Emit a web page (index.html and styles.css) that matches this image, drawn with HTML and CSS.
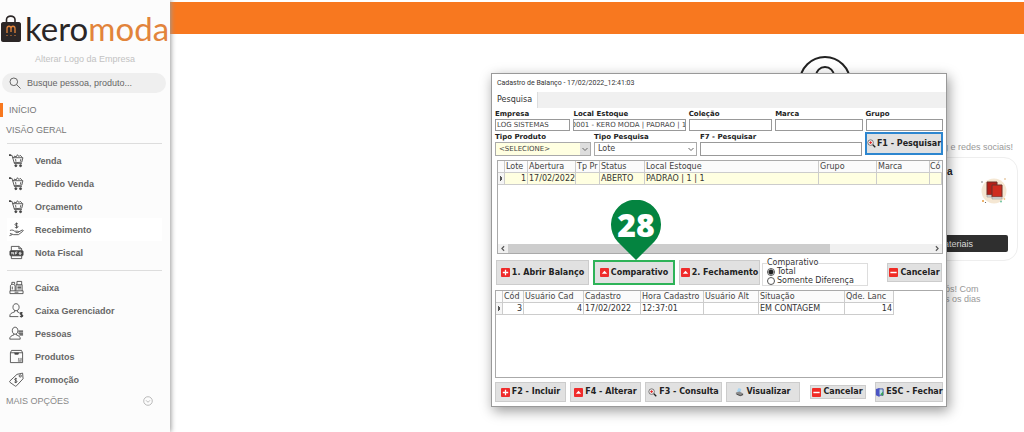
FILE: index.html
```html
<!DOCTYPE html>
<html lang="pt-BR">
<head>
<meta charset="utf-8">
<meta name="viewport" content="width=device-width, initial-scale=1">
<title>Kero Moda - Cadastro de Balanço</title>
<link rel="stylesheet" href="styles.css">
</head>
<body>
<svg class="defs" aria-hidden="true">
  <symbol id="cart" viewBox="0 0 16 16"><path d="M0 2.5h3.2l2.6 8.8h8M3.8 5h11l-1.2 4.8-8.2.6M5 4.8l1-1.6 1.6 1L9 1.8l1.6 2 1.4-1.4 2 2.2M7 6.5l.4 2.8M12.6 6.5l-.4 2.5"/><circle cx="7.3" cy="13.5" r="1.1" class="solid"/><circle cx="12.3" cy="13.5" r="1.1" class="solid"/><path d="M0 2.2h2" class="bold"/></symbol>
  <symbol id="hand" viewBox="0 0 16 16"><path d="M9.6 2.2C8.600 1.200 6.400 1.400 6.400 2.800S9.600 3.600 9.600 5 7.200 6.500 6.200 5.500M8 .6v6.200M1 9c3-1 4 0 5 .8h3.500c1 0 1 1.500 0 1.500H7M10 10.800l4-2.200c1.500-.3 1.500.8.500 1.500L10 13.500H5L1 12.200M.5 14.500l3-1"/></symbol>
  <symbol id="nfe" viewBox="0 0 16 16"><path d="M2.500 6V1.500h8L13.500 4v2M2.500 11.500v3h11v-3M10.500 1.500V4h3"/><rect x="1" y="6" width="14" height="5.500" rx="1" class="solid"/><path d="M3 10V7.500l2 2.500V7.500M7 10V7.500h2M7 8.800h1.500M11 9.200h2c0-2-2.200-2-2.200-.2 0 1.500 1.600 1.300 2 .8" stroke="#fff" stroke-width=".8"/></symbol>
  <symbol id="register" viewBox="0 0 16 16"><path d="M1 14.500v-3h14v3zM1.500 11.500V6.500C1.500 4 6 4 6.500 6.500v5M3 4.800V2.500h3v2.300M7.500 11V5h6.500v6.500M8.500 5V1.500h5V5"/><path d="M9 6.500h4M9 8h4M9 9.500h4M3.500 7v3M6 13h4"/></symbol>
  <symbol id="user-money" viewBox="0 0 16 16"><path d="M4.200 4.500c0-5 6.600-5 6.600 0S4.200 9.500 4.200 4.500M6 8v1.500C3 10.500.8 11 .8 14.500H10M9 8v1.500l2 .8"/><path d="M14.500 10.800c-1-1-2.800-.5-2.600.6.100 1.200 2.800.8 2.800 2.200 0 1.300-2 1.500-3 .5M13.200 9.500v6" stroke-width="1.200"/></symbol>
  <symbol id="user-list" viewBox="0 0 16 16"><path d="M3.500 5c0-5 6-5 6 0s-6 5-6 0M5.200 8.500v1C2.500 10.500.8 11 .8 14H12c0-3-1.500-3.500-4.200-4.500v-1"/><path d="M10 5.500H15M10 7.500H15M11 9.500H15" stroke-width="1.300"/></symbol>
  <symbol id="box" viewBox="0 0 16 16"><path d="M1.500 4v10.500h13V4zM1.500 4l1.200-2.500h10.600L14.500 4M6 4l.5 1h3.500V4M9.500 12.800h4M10.500 12V9.500M12.800 12V9.500"/><path d="M6 5h4" class="bold"/></symbol>
  <symbol id="tag" viewBox="0 0 16 16"><path d="m1 9.500 7.500-7L14.500 1.200l.5 6-7 7.500c-.6.600-1.200.600-1.800 0L1 11c-.5-.5-.5-1 0-1.500zM8.500 7.500c-1-1-2.600-.6-2.400.6.200 1.300 2.600.8 2.400 2.200-.2 1.200-2 1.300-2.800.3M7.200 6.200v5.600"/><circle cx="12" cy="4.200" r="1.200"/></symbol>
  <symbol id="add" viewBox="0 0 10 10"><rect width="10" height="10" rx="1" fill="#ef2b2b"/><path d="M5 2v6M2 5h6" stroke="#fff" stroke-width="1.400"/></symbol>
  <symbol id="up" viewBox="0 0 10 10"><rect width="10" height="10" rx="1" fill="#ef2b2b"/><path d="m5 3 3 3.500H2z" fill="#fff"/></symbol>
  <symbol id="minus" viewBox="0 0 10 10"><rect width="10" height="10" rx="1" fill="#f02c26"/><path d="M1.500 5h7" stroke="#fff" stroke-width="1.600"/></symbol>
  <symbol id="find" viewBox="0 0 12 12"><circle cx="4.800" cy="4.800" r="3.700" fill="#f3eded" stroke="#555"/><path d="M4.800 3v3.600M3 4.800h3.600" stroke="#e02020" stroke-width="1.300"/><path d="m7.800 7.800 3.200 3.200" stroke="#222" stroke-width="1.800"/></symbol>
  <symbol id="chevron" viewBox="0 0 8 8"><path d="m1.500 3 2.500 2.500L6.500 3" fill="none" stroke="#666" stroke-width="1"/></symbol>
</svg>

<aside class="sidebar">
  <div class="logo">
    <svg class="logo-bag" viewBox="0 0 20 27"><path d="M5.500 8V4.500C5.500 0 14 0 14 4.500V8" fill="none" stroke="#2b2626" stroke-width="1.600"/><path d="M2 7h16c1 0 2 1 2 2v16c0 1-1 2-2 2H2c-1 0-2-1-2-2V9c0-1 1-2 2-2z" fill="#2b2626"/><path d="M6 18v-4.500c0-3 4-3 4 0V17v-3.500c0-3 4-3 4 0V18" fill="none" stroke="#e2843b" stroke-width="1.300"/><path d="M5.500 20.500h1M9.500 20.500h1M13.500 20.500h1" stroke="#e2843b"/></svg>
    <span class="logo-name">kero<span class="logo-accent">moda</span></span>
  </div>
  <a class="change-logo" href="#">Alterar Logo da Empresa</a>
  <label class="search">
    <svg class="search-icon" viewBox="0 0 12 12"><circle cx="4.800" cy="4.800" r="3.800"/><path d="m7.500 7.500 4 4"/></svg>
    <input type="text" placeholder="Busque pessoa, produto..." aria-label="Busque pessoa, produto">
  </label>
  <nav>
    <a class="section active" href="#">INÍCIO</a>
    <a class="section" href="#">VISÃO GERAL</a>
    <ul class="menu">
      <li><a href="#"><svg><use href="#cart"/></svg>Venda</a></li>
      <li><a href="#"><svg><use href="#cart"/></svg>Pedido Venda</a></li>
      <li><a href="#"><svg><use href="#cart"/></svg>Orçamento</a></li>
      <li><a class="hovered" href="#"><svg><use href="#hand"/></svg>Recebimento</a></li>
      <li><a href="#"><svg><use href="#nfe"/></svg>Nota Fiscal</a></li>
    </ul>
    <ul class="menu">
      <li><a href="#"><svg><use href="#register"/></svg>Caixa</a></li>
      <li><a href="#"><svg><use href="#user-money"/></svg>Caixa Gerenciador</a></li>
      <li><a href="#"><svg><use href="#user-list"/></svg>Pessoas</a></li>
      <li><a href="#"><svg><use href="#box"/></svg>Produtos</a></li>
      <li><a href="#"><svg><use href="#tag"/></svg>Promoção</a></li>
    </ul>
    <a class="section more" href="#">MAIS OPÇÕES
      <svg viewBox="0 0 10 10"><circle cx="5" cy="5" r="4.300"/><path d="m3 4.300 2 2 2-2"/></svg></a>
  </nav>
</aside>

<main class="page">
  <header class="topbar"></header>
  <div class="content">
    <svg class="emblem" viewBox="0 0 52 52"><circle cx="26" cy="26" r="25"/><circle cx="26" cy="20" r="9"/><path d="M10 45c2-18 30-18 32 0"/></svg>
    <p class="lead">g e redes sociais!</p>
    <article class="card">
      <h2>a</h2>
      <svg class="books" viewBox="0 0 28 28"><circle cx="14" cy="14" r="12.500" fill="#f5e7d3"/><path d="M7 5h10v13H7z" fill="#b51f18" stroke="#6d302a"/><path d="M7 18h10v2H7z" fill="#ddd" stroke="#888" stroke-width=".5"/><path d="M12 8h10v12H12z" fill="#cf2c20" stroke="#6d302a"/><path d="M12 20h10v2H12z" fill="#ddd" stroke="#888" stroke-width=".5"/><circle cx="3" cy="24" r="1" fill="#e79a3c"/><circle cx="21" cy="24.500" r="1" fill="#6fc4a0"/><circle cx="25" cy="2" r="1" fill="#e9cda8"/><circle cx="2" cy="5" r=".7" fill="#555"/><circle cx="24.500" cy="22" r=".8" fill="#efb25b"/><circle cx="5.500" cy="25.500" r=".6" fill="#555"/></svg>
      <button type="button">ateriais</button>
    </article>
    <p class="note">ós! Com<br>s os dias</p>
  </div>
</main>

<section class="window" aria-label="Cadastro de Balanço">
  <h1 class="titlebar">Cadastro de Balanço - 17/02/2022_12:41:03</h1>
  <div class="tabs"><button class="tab" type="button">Pesquisa</button></div>
  <form class="panel">
    <div class="filters row-one">
      <label>Empresa<input type="text" value="LOG SISTEMAS"></label>
      <label>Local Estoque<input class="scrolled" type="text" value="0001 - KERO MODA | PADRAO | 1"></label>
      <label>Coleção<input type="text"></label>
      <label>Marca<input type="text"></label>
      <label>Grupo<input type="text"></label>
    </div>
    <div class="filters row-two">
      <label>Tipo Produto<span class="picker picker-yellow"><select><option>&lt;SELECIONE&gt;</option></select><svg><use href="#chevron"/></svg></span></label>
      <label>Tipo Pesquisa<span class="picker"><select><option>Lote</option></select><svg><use href="#chevron"/></svg></span></label>
      <label>F7 - Pesquisar<input type="text"></label>
      <button class="btn btn-focus" type="button"><svg><use href="#find"/></svg>F1 - Pesquisar</button>
    </div>
    <div class="grid grid-top">
      <div class="grid-view">
      <table class="lots">
        <colgroup><col class="w-mark"><col class="w-lote"><col class="w-date"><col class="w-tp"><col class="w-status"><col class="w-local"><col class="w-grupo"><col class="w-marca"><col></colgroup>
        <thead><tr><th></th><th>Lote</th><th>Abertura</th><th>Tp Pr</th><th>Status</th><th>Local Estoque</th><th>Grupo</th><th>Marca</th><th>Có</th></tr></thead>
        <tbody><tr><td class="mark"></td><td class="num">1</td><td>17/02/2022</td><td></td><td>ABERTO</td><td>PADRAO | 1 | 1</td><td></td><td></td><td></td></tr></tbody>
      </table>
      </div>
      <div class="scrollbar">
        <svg viewBox="0 0 8 8"><path d="M5 2 3 4l2 2"/></svg><span class="thumb"></span><svg viewBox="0 0 8 8"><path d="m3 2 2 2-2 2"/></svg>
      </div>
    </div>
    <div class="actions">
      <button class="btn" type="button"><svg><use href="#add"/></svg>1. Abrir Balanço</button>
      <div class="pinned">
        <button class="btn btn-marked" type="button"><svg><use href="#up"/></svg>Comparativo</button>
        <div class="pin"><svg viewBox="0 0 50 60"><path d="M25 60 6.500 41.500A25 25 0 1 1 43.500 41.500z" fill="#048440"/></svg><span>28</span></div>
      </div>
      <button class="btn" type="button"><svg><use href="#up"/></svg>2. Fechamento</button>
      <fieldset>
        <legend>Comparativo</legend>
        <label><input type="radio" name="cmp" checked>Total</label>
        <label><input type="radio" name="cmp">Somente Diferença</label>
      </fieldset>
      <button class="btn btn-small" type="button"><svg><use href="#minus"/></svg>Cancelar</button>
    </div>
  </form>
  <div class="grid grid-bottom">
    <table class="counts">
      <colgroup><col class="w-mark"><col class="w-cod"><col class="w-user"><col class="w-cad"><col class="w-hour"><col class="w-alt"><col class="w-sit"><col class="w-qty"></colgroup>
      <thead><tr><th></th><th>Cód</th><th>Usuário Cad</th><th>Cadastro</th><th>Hora Cadastro</th><th>Usuário Alt</th><th>Situação</th><th>Qde. Lanc</th></tr></thead>
      <tbody><tr><td class="mark"></td><td class="num">3</td><td class="num">4</td><td>17/02/2022</td><td>12:37:01</td><td></td><td>EM CONTAGEM</td><td class="num">14</td></tr></tbody>
    </table>
  </div>
  <footer class="commands">
    <button class="btn" type="button"><svg><use href="#add"/></svg>F2 - Incluir</button>
    <button class="btn" type="button"><svg><use href="#up"/></svg>F4 - Alterar</button>
    <button class="btn" type="button"><svg><use href="#find"/></svg>F3 - Consulta</button>
    <button class="btn" type="button"><svg viewBox="0 0 10 10"><path d="m2 4 2-4 3 1-1 4z" fill="#a8d4f0"/><path d="m1 5 4-1 4 2v2L6 9 1 7z" fill="#8a8a8a"/><path d="m2 7 4 1.500L9 7" stroke="#444" fill="none"/></svg>Visualizar</button>
    <button class="btn btn-small" type="button"><svg><use href="#minus"/></svg>Cancelar</button>
    <button class="btn" type="button"><svg viewBox="0 0 10 10"><path d="M4 1h5v7H4z" fill="#bfe3e6" stroke="#3c48a0"/><path d="m1 1 4-1v10L1 8z" fill="#4b54c4"/><path d="m6 7 3-3v5z" fill="#35a055"/></svg>ESC - Fechar</button>
  </footer>
</section>
</body>
</html>
```
FILE: styles.css
```css
* { box-sizing: border-box; }
body {
  position: relative;
  display: flex;
  min-height: 100vh;
  margin: 0;
  overflow: hidden;
  background: #fff;
  color: #222;
  font-family: "Liberation Sans", Arial, sans-serif;
  font-size: 9px;
}
a { color: inherit; text-decoration: none; }
ul, p, h1, h2 { margin: 0; padding: 0; list-style: none; }
input, select, button { font: inherit; color: inherit; margin: 0; }
.defs { position: absolute; width: 0; height: 0; }

/* Sidebar */
.sidebar {
  position: relative;
  flex: 0 0 170px;
  padding-top: 14px;
  background: #fcfcfc;
  box-shadow: 1px 0 5px #999;
}
.logo { display: flex; align-items: center; gap: 4px; height: 28px; padding: 0 1px; }
.logo-bag { flex: none; width: 20px; height: 27px; }
.logo-name { color: #2b2626; font: 33px/28px Lato, sans-serif; }
.logo-accent { color: #e2843b; }
.change-logo { display: block; margin-top: 11px; color: #c2c2c2; line-height: 12px; text-align: center; }
.search {
  display: flex;
  align-items: center;
  gap: 6px;
  height: 20px;
  margin: 8px 4px 0 2px;
  padding: 0 7px;
  border-radius: 10px;
  background: #efefef;
}
.search-icon { flex: none; width: 12px; height: 12px; fill: none; stroke: #666; }
.search input { flex: 1; min-width: 0; padding: 0; border: 0; outline: 0; background: none; font-family: "Liberation Sans", Arial, sans-serif; }
.search input::placeholder { color: #666; }
.sidebar nav { padding-top: 7px; }
.section { display: flex; align-items: center; height: 20px; padding-left: 6px; color: #777; }
.active { height: 14px; margin: 3px 0; border-left: 3px solid #f8781f; }
.menu { margin: 3px 8px 0 7px; padding: 5px 0 6px; border-top: 1px solid #ddd; }
.menu + .menu { margin-top: 0; padding-bottom: 0; }
.menu a { display: flex; align-items: center; gap: 11px; height: 23px; padding-left: 2px; color: #666; font-weight: bold; }
.menu .hovered { background: #fff; }
.menu svg { width: 15px; height: 15px; fill: none; stroke: #444; stroke-width: 0.9; }
.solid { fill: #444; }
.bold { stroke-width: 2; }
.more { justify-content: space-between; padding-right: 17px; color: #888; }
.more svg { width: 10px; height: 10px; fill: none; stroke: #aaa; stroke-width: 0.8; }

/* Page behind the window */
.page { flex: 1; min-width: 0; padding-top: 2px; }
.topbar { height: 32px; background: #f8781f; }
.content { display: flex; flex-direction: column; align-items: flex-end; padding-top: 22px; }
.emblem { width: 52px; height: 52px; margin-right: 173px; fill: none; stroke: #222; stroke-width: 2; }
.lead { margin: 33px 11px 0 0; color: #999; line-height: 12px; }
.card {
  display: grid;
  grid-template-columns: 1fr auto;
  width: 190px;
  margin: 4px 6px 0 0;
  padding: 8px 9px 8px 118px;
  border: 1px solid #eee;
  border-radius: 14px;
}
.card h2 { font-size: 10px; line-height: 12px; }
.books { width: 28px; height: 28px; margin-top: 11px; }
.card button { grid-column: 1 / -1; height: 17px; margin: 30px 0 0 -80px; padding: 0 35px 0 0; border: 0; border-radius: 2px; background: #2f2f2f; color: #ddd; text-align: right; }
.note { width: 79px; margin-top: 23px; color: #999; line-height: 10px; }

/* Window */
.window {
  position: absolute;
  top: 73px;
  left: 491px;
  width: 456px;
  border: 1px solid #999;
  background: #fff;
  box-shadow: 2px 4px 12px rgba(0, 0, 0, 0.4);
  color: #333;
  font: 8px/10px "DejaVu Sans", Verdana, sans-serif;
}
.titlebar { padding: 3px 5px; font: 7px/12px Roboto, "Noto Sans", sans-serif; }
.tabs { display: flex; height: 16px; background: #f0f0f0; }
.tab { padding: 0 5px; border: 0; border-right: 1px solid #ddd; background: #fff; }
.panel { padding: 1px 3px 3px; }
.filters { display: grid; column-gap: 3px; }
.row-one { grid-template-columns: 76fr 113fr 84fr 88fr 78fr; }
.row-two { grid-template-columns: 96fr 103fr 162fr 78fr; padding-top: 1px; }
.filters label { display: flex; flex-direction: column; min-width: 0; color: #222; font-size: 7px; font-weight: bold; line-height: 10px; }
.filters input { width: 100%; height: 12px; padding: 0 1px; border: 1px solid #999; background: #fff; color: #444; font-size: 7px; font-weight: normal; }
.filters .scrolled { padding: 0; text-indent: -3px; }
.row-two label input, .picker { height: 14px; }
.picker { position: relative; display: flex; border: 1px solid #aaa; background: #fff; color: #444; font-size: 8px; font-weight: normal; }
.picker select { flex: 1; min-width: 0; padding: 0 3px; border: 0; background: none; appearance: none; }
.picker svg { position: absolute; top: 0; right: 0; width: 10px; height: 12px; padding: 2px 1px; }
.picker-yellow { background: #ffffe1; font-size: 7px; }
.picker-yellow svg { background: #ddd; }
.btn {
  display: flex;
  align-items: center;
  justify-content: center;
  gap: 2px;
  min-width: 0;
  padding: 0;
  border: 1px solid #ccc;
  background: #e1e1e1;
  color: #222;
  font-size: 8px;
  font-weight: bold;
  white-space: nowrap;
}
.btn svg { flex: none; width: 9px; height: 9px; }
.btn-focus { gap: 1px; height: 23px; border: 2px solid #2d86cf; }

/* Data grids */
.grid { overflow: hidden; border: 1px solid #aaa; background: #fff; }
.grid-top { margin: 4px 0 0 2px; }
.grid-view { height: 83px; }
table { border-collapse: separate; border-spacing: 0; table-layout: fixed; }
th, td { height: 12px; padding: 0 1px; overflow: hidden; border-right: 1px solid #ccc; border-bottom: 1px solid #ccc; line-height: 11px; font-weight: normal; text-align: left; white-space: nowrap; }
th { background: #fbfbfb; color: #444; }
.lots { width: 100%; }
.lots th:last-child { padding: 0; border-right: 0; }
.counts { width: 398px; }
.lots td { background: #ffffe1; }
.num { text-align: right; }
.lots .mark, .counts .mark { background: linear-gradient(#555, #555) 2px 3px / 1px 5px no-repeat, linear-gradient(#555, #555) 3px 4px / 1px 3px no-repeat, #f5f5f5; }
.w-mark { width: 7px; }
.w-lote { width: 23px; }
.w-date { width: 48px; }
.w-tp { width: 24px; }
.w-status { width: 45px; }
.w-local { width: 174px; }
.w-grupo { width: 58px; }
.w-marca { width: 53px; }
.w-cod { width: 21px; }
.w-user { width: 60px; }
.w-cad { width: 57px; }
.w-hour { width: 63px; }
.w-alt { width: 55px; }
.w-sit { width: 86px; }
.w-qty { width: 49px; }
.scrollbar { display: grid; grid-template-columns: 10px 1fr 10px; height: 9px; background: #f0f0f0; }
.scrollbar svg { width: 10px; height: 9px; fill: none; stroke: #555; }
.thumb { width: 76%; background: #cdcdcd; }

/* Action bar */
.actions { display: grid; grid-template-columns: 93px 82px 81px 104px 1fr; column-gap: 4px; align-items: center; padding: 5px 1px 1px; }
.actions .btn { height: 25px; }
.pinned { position: relative; }
.pinned .btn { width: 100%; }
.actions .btn-marked { border: 2px solid #2eb358; }
.pin { position: absolute; bottom: 25px; left: 18px; width: 50px; height: 60px; }
.pin svg { display: block; width: 50px; height: 60px; }
.pin span { position: absolute; top: 0; left: 0; width: 100%; color: #fff; font: 800 32px/49px "Open Sans", sans-serif; text-align: center; }
.actions fieldset { min-width: 0; margin: 0 0 0 -2px; padding: 0 4px; border: 1px solid #ddd; }
.actions legend { padding: 0; font-size: 8px; line-height: 8px; }
.actions fieldset label { display: flex; align-items: center; gap: 2px; height: 9px; white-space: nowrap; }
.actions input { width: 8px; height: 8px; appearance: none; border: 1px solid #555; border-radius: 50%; }
.actions input:checked { background: radial-gradient(circle, #222 2px, #fff 3px); }
.actions .btn-small { justify-self: end; width: 55px; height: 19px; }
.grid-bottom { height: 88px; margin: 0 3px; }
.commands { display: grid; grid-template-columns: 71px 71px 77px 74px 1fr 68px; column-gap: 4px; align-items: center; padding: 4px 3px; }
.commands .btn { height: 20px; }
.commands .btn-small { justify-self: center; width: 56px; height: 14px; }
```
